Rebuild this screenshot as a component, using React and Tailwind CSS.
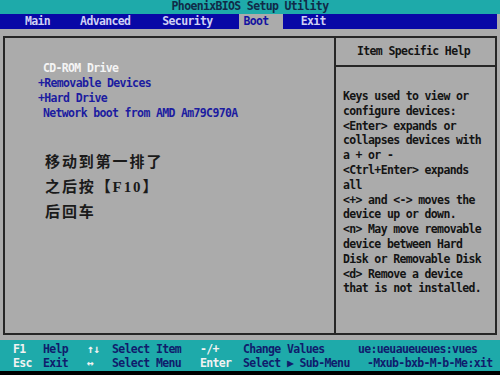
const mono = { fontFamily: '"DejaVu Sans Mono", "Liberation Mono", monospace' };

const tabs = [
  { label: 'Main', cls: 'ml-[20px] pl-[5px] pr-[5px]' },
  { label: 'Advanced', cls: 'ml-[20px] pl-[5px] pr-[5px]' },
  { label: 'Security', cls: 'ml-[22px] pl-[5px] pr-[5px]' },
  { label: 'Boot', cls: 'ml-[21px] pl-[5px] pr-[14px] bg-[#ababab] !text-[#1414a0]' },
  { label: 'Exit', cls: 'ml-[13px] pl-[5px] pr-[5px]' },
];

const bootItems = [
  { text: 'CD-ROM Drive', cls: 'pl-[5px] text-[#f4f4f4]' },
  { text: '+Removable Devices', cls: 'text-[#1c1ca0]' },
  { text: '+Hard Drive', cls: 'text-[#1c1ca0]' },
  { text: 'Network boot from AMD Am79C970A', cls: 'pl-[5px] text-[#1c1ca0]' },
];

const help = [
  'Keys used to view or',
  'configure devices:',
  '<Enter> expands or',
  'collapses devices with',
  'a + or -',
  '<Ctrl+Enter> expands',
  'all',
  '<+> and <-> moves the',
  'device up or down.',
  '<n> May move removable',
  'device between Hard',
  'Disk or Removable Disk',
  '<d> Remove a device',
  'that is not installed.',
];

function KeyRow({ k1, d1, k2, d2, k3, d3, tail, tailCls }) {
  return (
    <div className="flex h-[14.5px] items-center">
      <span className="w-[30px] pl-[13px] box-content text-[#f2f2f2]">{k1}</span>
      <span className="w-[44px] text-[#101c6c]">{d1}</span>
      <span className="w-[25px] text-[#f2f2f2]">{k2}</span>
      <span className="w-[88px] text-[#101c6c]">{d2}</span>
      <span className="w-[43px] text-[#f2f2f2]">{k3}</span>
      <span className="w-[115px] text-[#101c6c]">{d3}</span>
      <span className={`text-[#101c6c] ${tailCls}`}>{tail}</span>
    </div>
  );
}

export default function App() {
  return (
    <div
      className="w-[500px] h-[375px] flex flex-col bg-[#ababab] overflow-hidden text-[11.5px] tracking-[-0.65px] font-bold"
      style={mono}
    >
      <div className="h-[14px] bg-[#1eaaaa] flex items-center justify-center text-[#102a48]">
        PhoenixBIOS Setup Utility
      </div>

      <div className="h-[15px] bg-[#0808a6] flex items-stretch mr-[3px] text-[#cfd0f4]">
        {tabs.map((t) => (
          <span key={t.label} className={`flex items-center ${t.cls}`}>
            {t.label}
          </span>
        ))}
      </div>

      <div className="flex-1 px-[3px] pt-[7px] pb-[5px] flex">
        <div className="flex-1 flex border-2 border-[#262626]">
          <div className="w-[331px] border-r-2 border-[#262626] pt-[23px] pl-[33px]">
            {bootItems.map((it) => (
              <div key={it.text} className={`h-[15px] flex items-center ${it.cls}`}>
                {it.text}
              </div>
            ))}
            <div
              className="mt-[28px] pl-[7px] text-[15px] tracking-[1.9px] leading-[24.5px] text-[#1a1a1a] font-bold"
              style={{ fontFamily: '"Noto Sans CJK SC", "Liberation Serif", serif' }}
            >
              <div>移动到第一排了</div>
              <div>
                之后按【<span style={{ fontFamily: '"Liberation Serif", serif' }}>F10</span>】
              </div>
              <div>后回车</div>
            </div>
          </div>

          <div className="flex-1 flex flex-col">
            <div className="h-[29px] border-b-2 border-[#262626] flex items-center justify-center text-[#141414] pr-[4px]">
              Item Specific Help
            </div>
            <div className="pt-[22px] pl-[7px] text-[#141414] leading-[14.8px] whitespace-pre">
              {help.map((l, i) => (
                <div key={i}>{l}</div>
              ))}
            </div>
          </div>
        </div>
      </div>

      <div className="h-[31px] bg-[#1eaaaa] pt-[2px]">
        <KeyRow
          k1="F1"
          d1="Help"
          k2="↑↓"
          d2="Select Item"
          k3="-/+"
          d3="Change Values"
          tail="ue:ueuaueueues:vues"
          tailCls="pl-[0px]"
        />
        <KeyRow
          k1="Esc"
          d1="Exit"
          k2="↔"
          d2="Select Menu"
          k3="Enter"
          d3="Select ▶ Sub-Menu"
          tail="-Mxub-bxb-M-b-Me:xit"
          tailCls="pl-[9px]"
        />
      </div>
      <div className="h-[4px] bg-black" />
    </div>
  );
}
